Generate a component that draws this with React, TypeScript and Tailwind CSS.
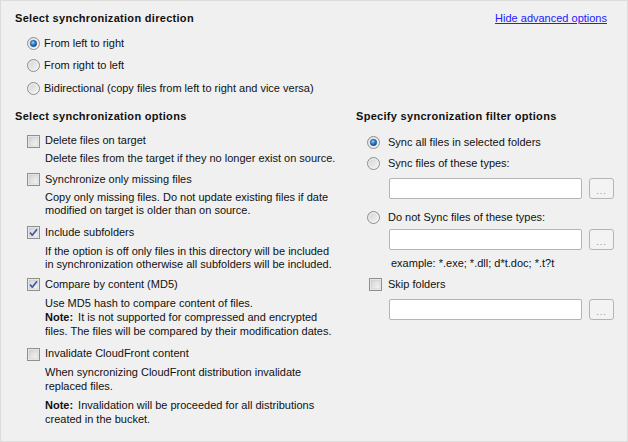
import React from "react";

function Radio({ checked }: { checked?: boolean }) {
  return (
    <svg width="13" height="13" viewBox="0 0 13 13" className="shrink-0">
      <defs>
        <linearGradient id="rg" x1="0" y1="0" x2="1" y2="1">
          <stop offset="0" stopColor="#d0d0d0" />
          <stop offset="1" stopColor="#f8f8f8" />
        </linearGradient>
        <radialGradient id="dot" cx="0.4" cy="0.35" r="0.7">
          <stop offset="0" stopColor="#8fd6ff" />
          <stop offset="0.5" stopColor="#2a7fd0" />
          <stop offset="1" stopColor="#0f3f82" />
        </radialGradient>
      </defs>
      <circle cx="6.5" cy="6.5" r="6" fill="url(#rg)" stroke="#8e8f8f" strokeWidth="1" />
      <circle cx="6.5" cy="6.5" r="4.6" fill="none" stroke="#f4f4f4" strokeWidth="0.8" />
      {checked && <circle cx="6.5" cy="6.5" r="3.2" fill="url(#dot)" stroke="#1c4f8f" strokeWidth="0.6" />}
    </svg>
  );
}

function Checkbox({ checked }: { checked?: boolean }) {
  return (
    <svg width="13" height="13" viewBox="0 0 13 13" className="shrink-0">
      <defs>
        <linearGradient id="cg" x1="0" y1="0" x2="1" y2="1">
          <stop offset="0" stopColor="#d2d2d2" />
          <stop offset="1" stopColor="#f6f6f6" />
        </linearGradient>
      </defs>
      <rect x="0.5" y="0.5" width="12" height="12" fill="#f4f4f4" stroke="#8e8f8f" />
      <rect x="2" y="2" width="9" height="9" fill="url(#cg)" stroke="#c4c4c4" strokeWidth="0.6" />
      {checked && (
        <path d="M3 6.6 L5.3 9.2 L10 3.2" fill="none" stroke="#3b5aa3" strokeWidth="1.7" strokeLinejoin="round" />
      )}
    </svg>
  );
}

function Field() {
  return (
    <div className="flex items-start gap-[7px]">
      <div className="w-[193px] h-[21px] bg-white border border-[#b4b4b4] rounded-[2px]" />
      <div className="w-[25px] h-[21px] rounded-[3px] border border-[#b4b4b4] bg-[#f3f3f3] flex items-end justify-center pb-[2px]">
        <span className="text-[9px] leading-[10px] text-[#8a8aa8] tracking-[1px]">...</span>
      </div>
    </div>
  );
}

export default function App() {
  return (
    <div
      className="w-[628px] h-[442px] bg-[#f0f0f0] text-[11px] leading-[14px] text-[#111] overflow-hidden border border-[#dcdcdc]"
      style={{ fontFamily: '"Liberation Sans", Arial, sans-serif' }}
    >
      <div className="pt-[10px] pl-[14px] pr-[20px] flex justify-between">
        <div className="font-bold tracking-[0.3px]">Select synchronization direction</div>
        <a href="#" className="text-[#2020ff] underline">Hide advanced options</a>
      </div>
      <div className="pl-[26px] flex flex-col">
        <label className="mt-[11px] h-[14px] flex items-center gap-[4px]"><Radio checked /><span>From left to right</span></label>
        <label className="mt-[8px] h-[14px] flex items-center gap-[4px]"><Radio /><span>From right to left</span></label>
        <label className="mt-[9px] h-[14px] flex items-center gap-[4px]"><Radio /><span>Bidirectional (copy files from left to right and vice versa)</span></label>
      </div>
      <div className="flex mt-[14px]">
        <div className="w-[355px] pl-[14px] flex flex-col">
          <div className="font-bold tracking-[0.3px]">Select synchronization options</div>
          <div className="pl-[12px] flex flex-col leading-[13.5px]">
            <label className="mt-[11px] h-[14px] flex items-center gap-[5px]"><Checkbox /><span>Delete files on target</span></label>
            <p className="mt-[4px] pl-[18px]">Delete files from the target if they no longer exist on source.</p>
            <label className="mt-[7px] h-[14px] flex items-center gap-[5px]"><Checkbox /><span>Synchronize only missing files</span></label>
            <p className="mt-[4px] pl-[18px]">Copy only missing files. Do not update existing files if date<br />modified on target is older than on source.</p>
            <label className="mt-[8px] h-[14px] flex items-center gap-[5px]"><Checkbox checked /><span>Include subfolders</span></label>
            <p className="mt-[5px] pl-[18px]">If the option is off only files in this directory will be included<br />in synchronization otherwise all subfolders will be included.</p>
            <label className="mt-[6px] h-[14px] flex items-center gap-[5px]"><Checkbox checked /><span>Compare by content (MD5)</span></label>
            <p className="mt-[5px] pl-[18px]">Use MD5 hash to compare content of files.</p>
            <p className="mt-[1px] pl-[18px]"><b className="mr-[5px]">Note:</b>It is not supported for compressed and encrypted<br />files. The files will be compared by their modification dates.</p>
            <label className="mt-[9px] h-[14px] flex items-center gap-[5px]"><Checkbox /><span>Invalidate CloudFront content</span></label>
            <p className="mt-[5px] pl-[18px]">When syncronizing CloudFront distribution invalidate<br />replaced files.</p>
            <p className="mt-[6px] pl-[18px]"><b className="mr-[5px]">Note:</b>Invalidation will be proceeded for all distributions<br />created in the bucket.</p>
          </div>
        </div>
        <div className="flex-1 flex flex-col">
          <div className="font-bold tracking-[0.3px]">Specify syncronization filter options</div>
          <div className="pl-[11px] flex flex-col">
            <label className="mt-[12px] h-[14px] flex items-center gap-[8px]"><Radio checked /><span>Sync all files in selected folders</span></label>
            <label className="mt-[7px] h-[14px] flex items-center gap-[8px]"><Radio /><span>Sync files of these types:</span></label>
            <div className="mt-[8px] pl-[22px]"><Field /></div>
            <label className="mt-[11px] h-[14px] flex items-center gap-[8px]"><Radio /><span>Do not Sync files of these types:</span></label>
            <div className="mt-[5px] pl-[22px]"><Field /></div>
            <div className="mt-[6px] pl-[24px]">example: *.exe; *.dll; d*t.doc; *.t?t</div>
            <label className="mt-[7px] h-[14px] flex items-center gap-[6px] pl-[2px]"><Checkbox /><span>Skip folders</span></label>
            <div className="mt-[8px] pl-[22px]"><Field /></div>
          </div>
        </div>
      </div>
    </div>
  );
}
